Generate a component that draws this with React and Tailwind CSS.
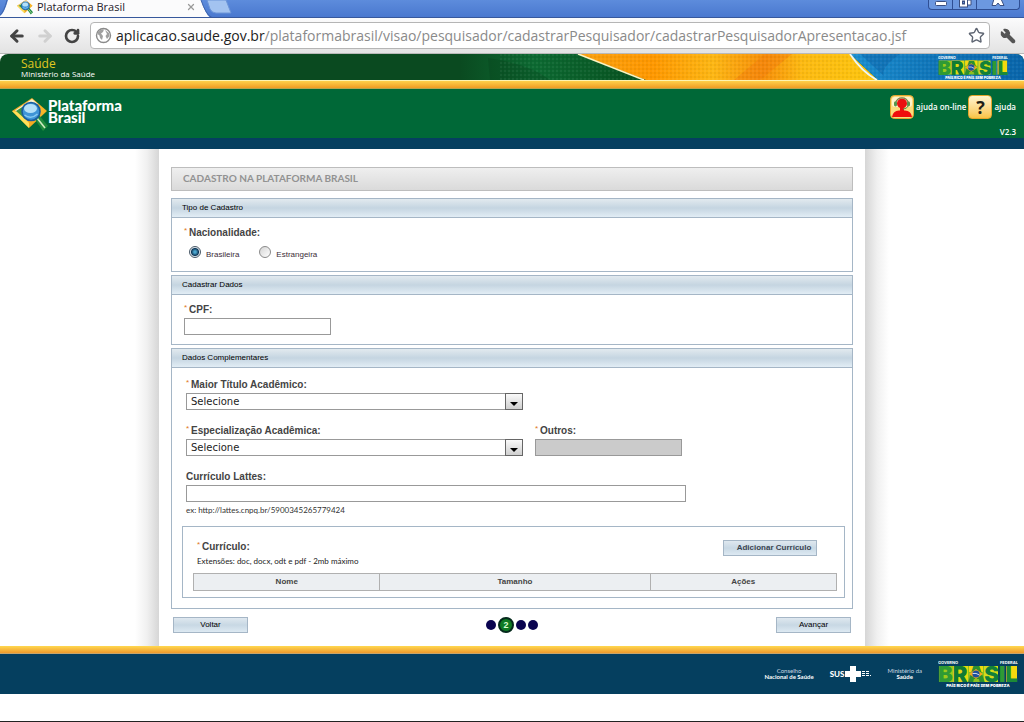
import React, { useState } from 'react';
import { ArrowLeft, ArrowRight, RotateCw, Star, Wrench, X } from 'lucide-react';

const LogoMark = ({ className }) => (
  <svg viewBox="0 0 36 34" className={className} aria-hidden="true">
    <path d="M0 14 L20 1 L35 14 L17 31 Z" fill="#f3ab22" />
    <path d="M0 14 L17 31 L17 26 L7 15 Z" fill="#ffe058" />
    <path d="M3 13.500 L20 2 L26 7 L10 17 Z" fill="#f8f3d2" />
    <path d="M4 14 L15 7 L12 21 Z" fill="#3f9440" />
    <path d="M27 8 L34 14 L25 22 Z" fill="#f8b62a" />
    <path d="M22 21 L27 18 L36 29 L31 34 Z" fill="#1f8a3c" />
    <path d="M25 21 L33 31" stroke="#cfeac0" strokeWidth="1.6" />
    <circle cx="19" cy="14.500" r="9" fill="#3f94d6" stroke="#1a5c9c" strokeWidth="1.6" />
    <ellipse cx="18.500" cy="11.500" rx="6.500" ry="4.500" fill="#b4e0f8" />
    <path d="M12.500 18 Q19 23 25.500 17" stroke="#86c9f2" strokeWidth="1.500" fill="none" />
  </svg>
);

const BrasilLogo = ({ className }) => (
  <svg viewBox="0 0 80 26" className={className} role="img" aria-label="Brasil">
    <rect x="1" y="5" width="14" height="16" fill="#9ccb1c" />
    <rect x="15" y="5" width="15" height="16" fill="#e2d912" />
    <rect x="30" y="5" width="16" height="16" fill="#8cc21f" />
    <rect x="31" y="5" width="14" height="6" fill="#f4d90f" />
    <rect x="46" y="5" width="14" height="16" fill="#d6dc18" />
    <rect x="68" y="5" width="11" height="16" fill="#f4d90f" />
    <text x="0" y="3" fontSize="4" fontWeight="700" fill="#fff" fontFamily="Inter, sans-serif">GOVERNO</text>
    <text x="80" y="3" fontSize="4" fontWeight="700" fill="#fff" textAnchor="end" fontFamily="Inter, sans-serif">FEDERAL</text>
    <text x="0" y="21" fontSize="22" fontWeight="900" fontFamily="Inter, sans-serif">
      <tspan fill="#2f9a35">B</tspan>
      <tspan fill="#0f7a35">R</tspan>
      <tspan fill="#2c8f30">A</tspan>
      <tspan fill="#12803a">S</tspan>
      <tspan fill="#2f9a35">I</tspan>
      <tspan fill="#1c8a38">L</tspan>
    </text>
    <path d="M31 13 L38 8 L45 13 L38 18 Z" fill="#f7a81b" />
    <circle cx="38" cy="13" r="3.6" fill="#1d4f9c" />
    <path d="M34.6 12.5 Q38 11.6 41.4 14" stroke="#fff" strokeWidth="0.8" fill="none" />
    <text x="40" y="26" fontSize="4" fontWeight="900" fill="#fff" textAnchor="middle" fontFamily="Inter, sans-serif">PAÍS RICO É PAÍS SEM POBREZA</text>
  </svg>
);

const BrowserBar = () => (
  <div className="font-['Open_Sans',sans-serif]">
    <div className="relative flex h-[18px] items-start justify-between overflow-hidden border-b border-[#37589c] bg-gradient-to-b from-[#5d8cdc] to-[#4a78cf]">
      <svg width="240" height="18" viewBox="0 0 240 18" className="absolute left-0 top-0" aria-hidden="true">
        <path d="M0 18 V16 Q4 14 8 0 H201 Q206 16 211 18 Z" fill="#fbfbfc" />
        <path d="M201 0 Q206 15 212 17.5" stroke="#3f64ab" fill="none" />
        <path d="M0 15 Q4 12 7 0" stroke="#3f64ab" fill="none" />
        <path d="M207 0 H226 L231 13 H216 Q212 13 210 9 Z" fill="#a3c3f0" stroke="#6c95d8" />
      </svg>
      <div className="relative flex h-[14px] w-[196px] items-center pl-[17px]">
        <LogoMark className="size-4" />
        <span className="ml-1 flex-1 whitespace-nowrap text-[11px] leading-[14px] text-[#1f1a2a]">Plataforma Brasil</span>
        <button type="button" aria-label="Fechar guia"><X size={10} strokeWidth={3} className="text-[#9a9a9a]" /></button>
      </div>
      <div className="mr-1 flex h-[10px] divide-x divide-[#2f4f94] overflow-hidden rounded-b border border-t-0 border-[#2f4f94] bg-[#6c98e0]">
        <button type="button" aria-label="Minimizar" className="flex w-6 items-start justify-center">
          <svg width="12" height="7" aria-hidden="true"><rect x="0.5" y="1.5" width="11" height="4" rx="1" fill="#fff" stroke="#3a4f80" /></svg>
        </button>
        <button type="button" aria-label="Restaurar" className="flex w-6 items-start justify-center">
          <svg width="14" height="8" aria-hidden="true">
            <path d="M5 0 H13 V5 H10" fill="#fff" stroke="#3a4f80" />
            <rect x="1.5" y="-2" width="8" height="9" fill="#fff" stroke="#3a4f80" />
            <rect x="4.5" y="1" width="2" height="3" fill="#6c98e0" stroke="#3a4f80" />
          </svg>
        </button>
        <button type="button" aria-label="Fechar" className="flex w-[42px] items-start justify-center">
          <svg width="14" height="7" aria-hidden="true"><path d="M3 -1 L1 5.5 H5 L7 3 L9 5.5 H13 L10 -1 Z" fill="#fff" stroke="#3a4f80" /></svg>
        </button>
      </div>
    </div>
    <div className="flex h-9 items-center gap-[10px] border-b border-[#b9b9b9] bg-gradient-to-b from-[#fbfbfc] to-[#e3e3e3] px-2">
      <button type="button" aria-label="Voltar página"><ArrowLeft size={18} strokeWidth={4} className="text-[#444]" /></button>
      <button type="button" aria-label="Avançar página"><ArrowRight size={18} strokeWidth={4} className="text-[#d0d0d0]" /></button>
      <button type="button" aria-label="Recarregar"><RotateCw size={16} strokeWidth={4} className="text-[#444]" /></button>
      <div className="flex h-[27px] min-w-0 flex-1 items-center rounded border border-[#b5b5b5] bg-white px-1">
        <svg width="17" height="17" viewBox="0 0 17 17" className="shrink-0" aria-hidden="true">
          <circle cx="8.5" cy="8.5" r="7" fill="#fff" stroke="#8a8a8a" strokeWidth="1.4" />
          <path d="M3 5 Q6 1.5 9 2.5 L8 5 L6 6.500 L8 9 L7 13 L5 11 L4.500 8.500 L2.500 7 Z" fill="#a0a0a0" />
          <path d="M10 3 L14 6 L14.500 9 L12 12 L10.500 9 L12 7 Z" fill="#a0a0a0" />
        </svg>
        <p className="ml-1 min-w-0 flex-1 truncate text-[14px] leading-6 text-[#8a8a8a]">
          <span className="text-[#222]">aplicacao.saude.gov.br</span>/plataformabrasil/visao/pesquisador/cadastrarPesquisador/cadastrarPesquisadorApresentacao.jsf
        </p>
        <button type="button" aria-label="Favoritos"><Star size={17} strokeWidth={2} className="text-[#5f6673]" /></button>
      </div>
      <button type="button" aria-label="Ferramentas"><Wrench size={16} strokeWidth={2} className="-scale-x-100 fill-[#555] text-[#555]" /></button>
    </div>
  </div>
);

const GovBanner = () => (
  <div className="relative flex h-[26px] justify-between overflow-hidden rounded-t-lg bg-[#0a4a20]">
    <div className="pl-[21px] font-['Open_Sans',sans-serif]">
      <p className="pt-1 text-[12px] leading-3 text-[#e0c820]">Saúde</p>
      <p className="text-[8px] leading-[8px] text-white">Ministério da Saúde</p>
    </div>
    <svg width="564" height="26" viewBox="0 0 564 26" className="shrink-0" aria-hidden="true">
      <defs>
        <linearGradient id="leaf" x1="0" x2="1"><stop offset="0" stopColor="#0a4a20" /><stop offset="0.4" stopColor="#0d6a32" /><stop offset="1" stopColor="#07501f" /></linearGradient>
        <linearGradient id="sun" x1="0" x2="1">
          <stop offset="0" stopColor="#f9a010" /><stop offset="0.25" stopColor="#ff9800" /><stop offset="0.45" stopColor="#fdb714" />
          <stop offset="0.62" stopColor="#f78f0a" /><stop offset="0.75" stopColor="#fdbb12" /><stop offset="1" stopColor="#fdc60e" />
        </linearGradient>
        <linearGradient id="sky" x1="0" x2="1"><stop offset="0" stopColor="#1c8fd0" /><stop offset="0.5" stopColor="#0f74b8" /><stop offset="1" stopColor="#0a66ab" /></linearGradient>
        <pattern id="dots" width="4" height="4" patternUnits="userSpaceOnUse"><circle cx="1" cy="1" r="0.7" fill="#fff" opacity="0.14" /><circle cx="3" cy="3" r="0.7" fill="#000" opacity="0.12" /></pattern>
      </defs>
      <path d="M0 0 H118 L186 26 H0 Z" fill="url(#leaf)" />
      <path d="M28 4 Q70 10 90 26 H30 Z" fill="#063f1c" opacity="0.3" />
      <path d="M118 0 H390 L418 26 H186 Z" fill="url(#sun)" />
      <path d="M305 0 L274 26 H300 L332 0 Z" fill="#f47f0c" opacity="0.5" />
      <path d="M390 0 H564 V26 H418 Z" fill="url(#sky)" />
      <path d="M400 0 H440 Q420 14 424 22 Z" fill="#0a5aa0" opacity="0.4" />
      <rect x="40" width="524" height="26" fill="url(#dots)" />
      <path d="M118 0 L184 26" stroke="#fdf3c0" strokeWidth="1.6" />
      <path d="M390 0 Q402 18 417 26" stroke="#e9f6fb" strokeWidth="1.8" fill="none" />
    </svg>
    <BrasilLogo className="absolute right-4 top-[2px] h-[23px] w-[70px]" />
  </div>
);

const HelpLinks = () => (
  <div className="flex flex-col items-end justify-between pt-[6px] pr-2 font-['Open_Sans',sans-serif] text-[8px] font-semibold leading-3 text-white">
    <div className="flex items-center gap-[2px]">
      <a href="#ajuda-online" className="flex items-center gap-[2px]">
        <svg width="24" height="24" viewBox="0 0 24 24" aria-hidden="true">
          <rect x="0.5" y="0.5" width="23" height="23" rx="4" fill="#fbdc7d" stroke="#e4a52c" />
          <rect x="2" y="2" width="20" height="10" rx="3" fill="#fff3cb" />
          <path d="M2 22 Q3 15.500 9 15.500 H15 Q21 15.500 22 22 Z" fill="#f00d0d" />
          <circle cx="12" cy="8.500" r="5" fill="#ea1111" />
          <rect x="10" y="12" width="4" height="4" fill="#ea1111" />
          <path d="M5.500 8 Q7 2.800 12 2.800 Q17 2.800 18.500 8" stroke="#7b7f45" strokeWidth="1.2" fill="none" />
          <rect x="4" y="6.500" width="3" height="5" rx="1.400" fill="#55964c" />
          <rect x="17" y="6.500" width="3" height="5" rx="1.400" fill="#55964c" />
          <path d="M18 11 Q17 14 13 14" stroke="#55964c" fill="none" />
        </svg>
        ajuda on-line
      </a>
      <a href="#ajuda" className="flex items-center gap-[2px]">
        <span className="flex size-6 items-center justify-center rounded border border-[#e4a52c] bg-gradient-to-b from-[#fff4cf] to-[#f8c443] text-[18px] font-bold text-[#1f1d16]">?</span>
        ajuda
      </a>
    </div>
    <span>V2.3</span>
  </div>
);

const Section = ({ title, children }) => (
  <section className="mb-[3px] border border-[#a5b6c6]">
    <h2 className="h-[19px] border-b border-[#a5b6c6] bg-gradient-to-b from-[#e2eaef] via-[#c5d5e1] to-[#e2edf5] px-[10px] text-[8px] leading-[18px] text-black">{title}</h2>
    {children}
  </section>
);

const labelClass = 'flex h-4 items-center whitespace-nowrap text-[10px] leading-3 font-bold text-[#444]';

const Required = () => <span className="w-[5px] self-start text-[8px] font-normal leading-3 text-[#e07820]">*</span>;

const Label = ({ htmlFor, required, children }) => (
  <label htmlFor={htmlFor} className={labelClass}>
    {required && <Required />}
    {children}
  </label>
);

const SelectBox = ({ id }) => (
  <div className="relative h-[17px] w-[337px]">
    <select id={id} className="block h-full w-full appearance-none border border-[#999] bg-white pl-1 font-['DejaVu_Sans',sans-serif] text-[10px] leading-[15px] text-[#222]">
      <option>Selecione</option>
    </select>
    <span className="pointer-events-none absolute right-0 top-0 flex h-[17px] w-[18px] items-end justify-center border border-[#666] bg-gradient-to-b from-[#fafafa] to-[#cfcfcf] pb-[3px]">
      <svg width="8" height="4" aria-hidden="true"><path d="M0 0 H8 L4 4 Z" fill="#000" /></svg>
    </span>
  </div>
);

const inputClass = 'block h-[17px] border border-[#999] bg-white px-1 text-[10px] disabled:bg-[#cbcbcb]';
const radioClass = 'size-3 appearance-none rounded-full border border-[#8a8a8a] bg-gradient-to-br from-[#d5d5d5] to-white checked:border-[#4a5a68] checked:bg-radial checked:from-[#4aa6cf] checked:from-15% checked:via-[#123c5c] checked:via-50% checked:to-[#e8eef2] checked:to-65%';
const buttonClass = 'h-4 border border-[#a5b6c6] bg-gradient-to-b from-[#dfe8ef] via-[#c8d8e4] to-[#dde9f2] text-[8px] leading-[14px]';

const Steps = () => (
  <div className="flex items-center gap-[2px]">
    {[1, 2, 3, 4].map((n) => (
      n === 2
        ? <span key={n} className="flex size-4 items-center justify-center rounded-full border-2 border-[#052a1c] bg-[#0f7a24] text-[9px] font-bold leading-3 text-[#d8ffd0]">{n}</span>
        : <span key={n} className="size-[10px] rounded-full bg-[#0a0450]" />
    ))}
  </div>
);

const RegistrationForm = () => {
  const [nationality, setNationality] = useState('brasileira');

  return (
    <form onSubmit={(e) => e.preventDefault()} className="min-w-0 flex-1 bg-white px-3 pt-[18px] pb-[13px] font-['Liberation_Sans',sans-serif]">
      <h1 className="mb-[7px] border border-[#bdbdbd] bg-gradient-to-b from-[#efefef] to-[#dadada] px-[11px] pb-[2px] font-['Lato',sans-serif] text-[10px] font-bold leading-5 text-[#929292]">CADASTRO NA PLATAFORMA BRASIL</h1>

      <Section title="Tipo de Cadastro">
        <div role="radiogroup" aria-labelledby="nacionalidade" className="px-3 pt-[7px] pb-[10px]">
          <p id="nacionalidade" className={labelClass}><Required />Nacionalidade:</p>
          <div className="flex gap-5 pt-[5px] pl-[5px] text-[8px] leading-3 text-[#3c2c38]">
            {[['brasileira', 'Brasileira'], ['estrangeira', 'Estrangeira']].map(([value, text]) => (
              <label key={value} className="flex items-start gap-[5px]">
                <input type="radio" name="nationality" value={value} checked={nationality === value} onChange={() => setNationality(value)} className={radioClass} />
                <span className="pt-[3px]">{text}</span>
              </label>
            ))}
          </div>
        </div>
      </Section>

      <Section title="Cadastrar Dados">
        <div className="px-3 pt-[7px] pb-[9px]">
          <Label htmlFor="cpf" required>CPF:</Label>
          <input id="cpf" type="text" className={`${inputClass} w-[147px]`} />
        </div>
      </Section>

      <Section title="Dados Complementares">
        <div className="pt-[9px] pr-[7px] pb-[10px] pl-[10px]">
          <div className="space-y-[13px] px-1">
            <div>
              <Label htmlFor="titulo" required>Maior Título Acadêmico:</Label>
              <SelectBox id="titulo" />
            </div>
            <div className="flex gap-3">
              <div>
                <Label htmlFor="especializacao" required>Especialização Acadêmica:</Label>
                <SelectBox id="especializacao" />
              </div>
              <div>
                <Label htmlFor="outros" required>Outros:</Label>
                <input id="outros" type="text" disabled className={`${inputClass} w-[147px]`} />
              </div>
            </div>
            <div>
              <Label htmlFor="lattes">Currículo Lattes:</Label>
              <input id="lattes" type="text" className={`${inputClass} w-full max-w-[500px]`} />
              <p className="font-['Lato',sans-serif] text-[8px] leading-4 text-[#333]">ex: http://lattes.cnpq.br/5900345265779424</p>
            </div>
          </div>

          <div className="mt-2 border border-[#a5b6c6] pt-3 pr-[7px] pb-[6px] pl-[10px]">
            <div className="flex items-start justify-between pr-5 pb-[6px] pl-1">
              <div>
                <Label required>Currículo:</Label>
                <p className="font-['Lato',sans-serif] text-[8px] leading-3 text-[#222]">Extensões: doc, docx, odt e pdf - 2mb máximo</p>
              </div>
              <button type="button" className={`${buttonClass} mt-px w-[94px] pl-2 font-bold text-[#3a4450]`}>Adicionar Currículo</button>
            </div>
            <table className="w-full table-fixed border-collapse bg-[#eceff2] text-[8px] leading-4 text-[#444]">
              <thead>
                <tr>
                  <th className="w-[29%] border border-[#b0b0b0]">Nome</th>
                  <th className="w-[42%] border border-[#b0b0b0]">Tamanho</th>
                  <th className="w-[29%] border border-[#b0b0b0]">Ações</th>
                </tr>
              </thead>
            </table>
          </div>
        </div>
      </Section>

      <div className="flex items-center justify-between px-[2px] pt-[5px]">
        <button type="button" className={`${buttonClass} w-[75px] text-black`}>Voltar</button>
        <Steps />
        <button type="submit" className={`${buttonClass} w-[75px] text-black`}>Avançar</button>
      </div>
    </form>
  );
};

const Footer = () => (
  <footer>
    <div className="h-2 border-b border-[#c9a56a] bg-gradient-to-b from-[#ffd84f] to-[#ee9a2c]" />
    <div className="flex h-10 items-center justify-end gap-4 bg-[#053f5f] pr-[6px] text-center font-['Lato',sans-serif] text-[6px] leading-[6px] text-white">
      <p className="text-[#c9d8e2]">Conselho<br /><b className="text-white">Nacional de Saúde</b></p>
      <div className="flex items-center gap-px">
        <b className="text-[8px] leading-3 font-black">SUS</b>
        <svg width="16" height="16" className="shrink-0" aria-hidden="true"><path d="M5 0 H11 V5 H16 V11 H11 V16 H5 V11 H0 V5 H5 Z" fill="#fff" /></svg>
        <svg width="9" height="6" className="shrink-0" aria-hidden="true"><path d="M0 0.500 H7 M0 2.500 H8 M0 4.500 H9" stroke="#fff" strokeDasharray="3 1" /></svg>
      </div>
      <p className="text-[#c9d8e2]">Ministério da<br /><b className="text-white">Saúde</b></p>
      <BrasilLogo className="h-[26px] w-20" />
    </div>
  </footer>
);

const App = () => (
  <div className="flex min-h-screen flex-col border-b border-[#222] bg-white">
    <BrowserBar />
    <header>
      <GovBanner />
      <div className="h-[9px] border-t border-b border-t-[#fff3b0] border-b-[#b9a34c] bg-gradient-to-b from-[#ffd04a] to-[#f09c22]" />
      <div className="flex h-[49px] justify-between bg-[#006837]">
        <div className="flex items-start pt-2 pl-3">
          <LogoMark className="h-[34px] w-9" />
          <p className="font-['Lato',sans-serif] text-[15px] font-black leading-3 pt-[2px] text-white">Plataforma<br />Brasil</p>
        </div>
        <HelpLinks />
      </div>
      <div className="h-[11px] bg-[#053f60]" />
    </header>
    <main className="mx-auto flex w-full max-w-[754px]">
      <div className="w-6 bg-gradient-to-r from-white via-[#f0f0f0] to-[#d6d6d6]" />
      <RegistrationForm />
      <div className="w-6 bg-gradient-to-l from-white via-[#f0f0f0] to-[#d6d6d6]" />
    </main>
    <Footer />
  </div>
);

export default App;
